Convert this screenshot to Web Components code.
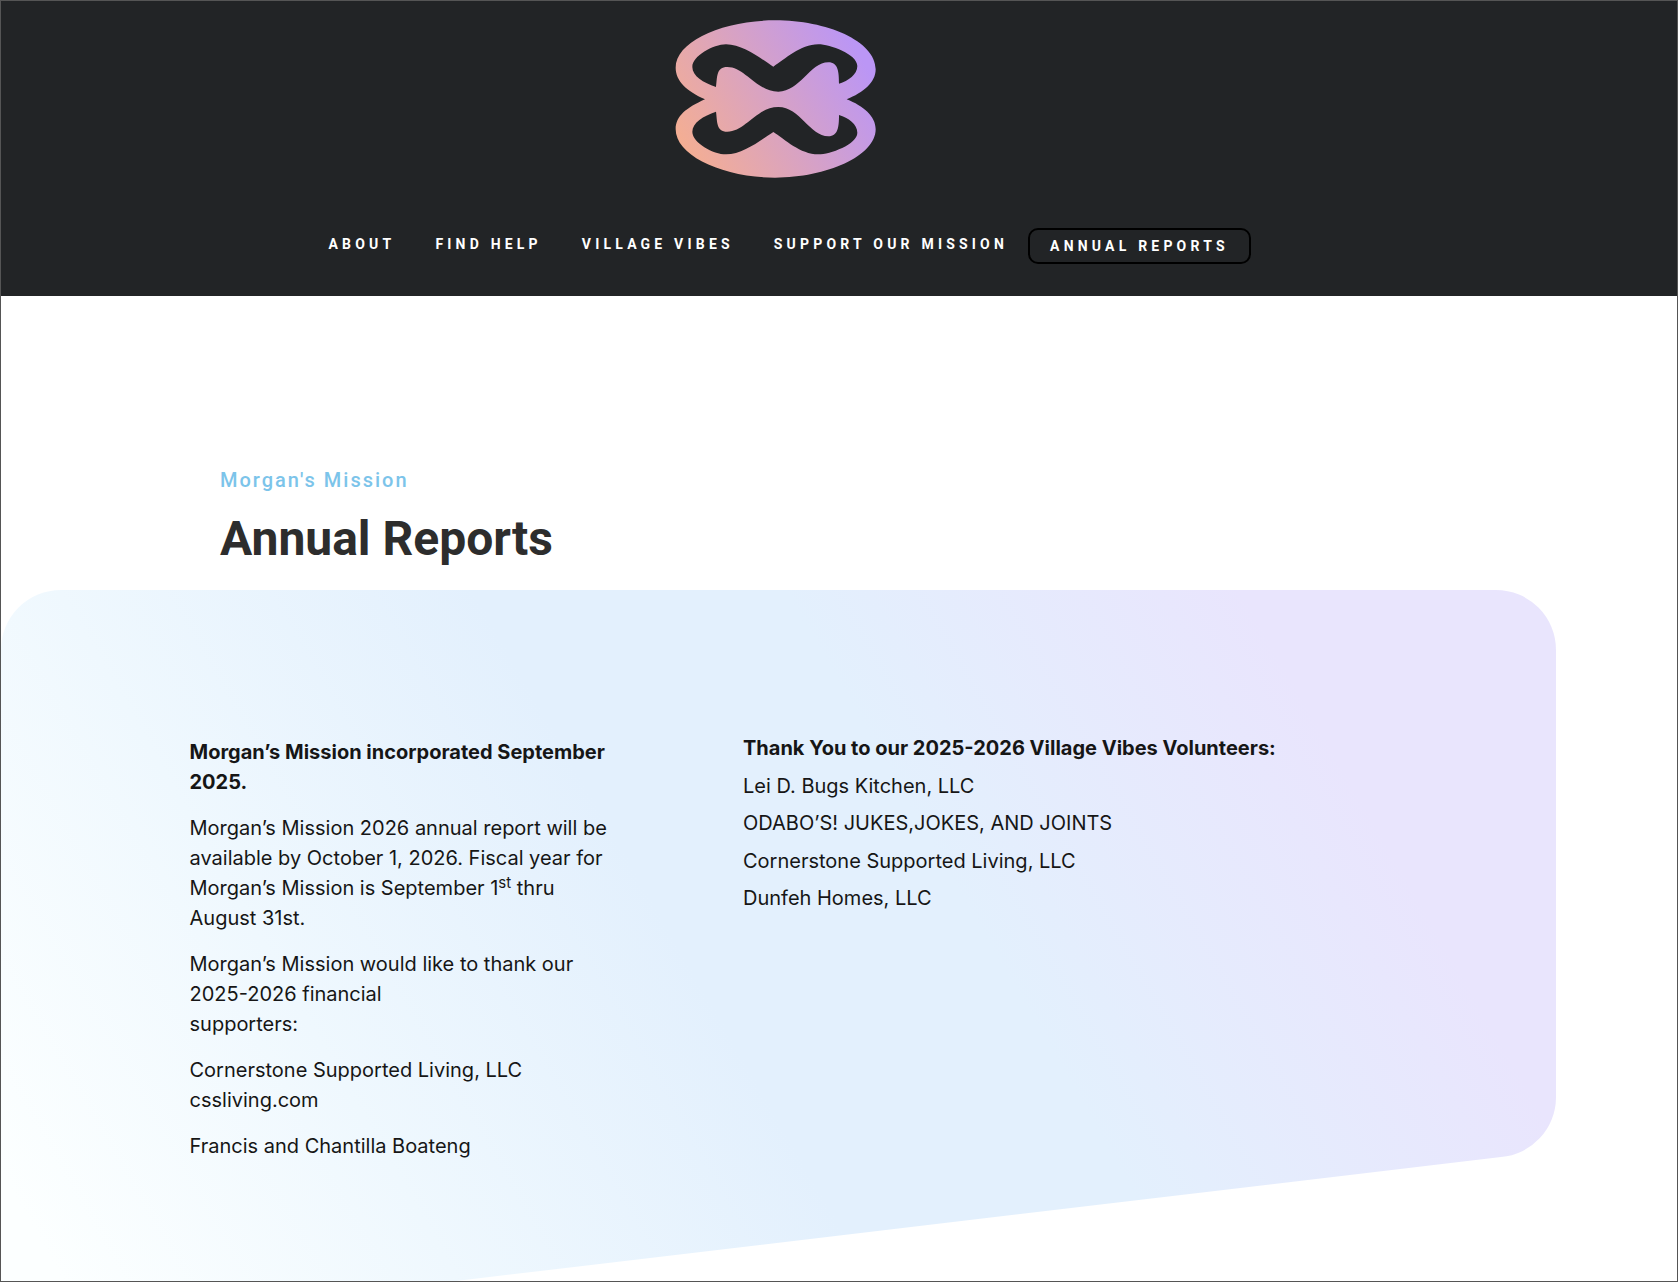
<!DOCTYPE html>
<html lang="en">
<head>
<meta charset="utf-8">
<title>Annual Reports</title>
<style>
    html, body { margin: 0; padding: 0; background: #fff; }
</style>
</head>
<body>
<site-page>
    <site-header></site-header>
    <page-title label="Morgan's Mission" heading="Annual Reports"></page-title>
    <report-panel>
        <div slot="left">
            <p><b>Morgan’s Mission incorporated September 2025.</b></p>
            <p>Morgan’s Mission 2026 annual report will be available by October 1, 2026. Fiscal year for Morgan’s Mission is September 1<sup>st</sup> thru August 31st.</p>
            <p>Morgan’s Mission would like to thank our 2025-2026 financial<br>supporters:</p>
            <p>Cornerstone Supported Living, LLC<br>cssliving.com</p>
            <p>Francis and Chantilla Boateng</p>
        </div>
        <div slot="right">
            <p><b>Thank You to our 2025-2026 Village Vibes Volunteers:</b></p>
            <p>Lei D. Bugs Kitchen, LLC</p>
            <p>ODABO’S! JUKES,JOKES, AND JOINTS</p>
            <p>Cornerstone Supported Living, LLC</p>
            <p>Dunfeh Homes, LLC</p>
        </div>
    </report-panel>
</site-page>

<script>
class SitePage extends HTMLElement {
    constructor() {
        super();
        this.attachShadow({ mode: 'open' });
        this.shadowRoot.innerHTML = `
            <style>
                :host {
                    display: block;
                    box-sizing: border-box;
                    height: 1282px;
                    overflow: hidden;
                    border: 1px solid #555;
                    background: #fff;
                }
            </style>
            <slot></slot>
        `;
    }
}

class SiteLogo extends HTMLElement {
    constructor() {
        super();
        this.attachShadow({ mode: 'open' });
        this.shadowRoot.innerHTML = `
            <style>
                :host { display: block; width: 280px; height: 200px; }
                svg { display: block; }
            </style>
            <svg width="280" height="200" viewBox="0 0 840 600">
                <defs>
                    <linearGradient id="g" gradientUnits="userSpaceOnUse" x1="170" y1="510" x2="690" y2="215">
                        <stop offset="0" stop-color="#f4ae93"/>
                        <stop offset="1" stop-color="#bb96f5"/>
                    </linearGradient>
                </defs>
                <path fill="url(#g)" d="M195 295C140 270 107 240 107 200C107 120 250 58 405 58C560 58 707 120 707 205C707 245 670 275 620 295C670 315 707 345 707 385C707 465 560 530 405 530C250 530 107 465 107 385C107 345 140 320 195 295Z"/>
                <path fill="#222426" d="M228 258C190 245 157 225 157 198C157 165 220 130 258 130C310 130 365 175 400 197C435 175 480 130 535 130C570 130 652 160 652 195C652 220 625 240 597 248C597 215 595 184 565 184C510 184 480 272 415 272C350 272 315 198 262 198C228 198 232 230 228 258Z"/>
                <path fill="#222426" transform="matrix(1 0 0 -1 0 590)" d="M228 258C190 245 157 225 157 198C157 165 220 130 258 130C310 130 365 175 400 197C435 175 480 130 535 130C570 130 652 160 652 195C652 220 625 240 597 248C597 215 595 184 565 184C510 184 480 272 415 272C350 272 315 198 262 198C228 198 232 230 228 258Z"/>
            </svg>
        `;
    }
}

class NavLink extends HTMLElement {
    constructor() {
        super();
        this.attachShadow({ mode: 'open' });
        this.shadowRoot.innerHTML = `
            <style>
                :host {
                    display: block;
                    padding: 0 20px 4px;
                    font: 700 14px/20px Roboto, sans-serif;
                    letter-spacing: 4.2px;
                    color: #fff;
                    white-space: nowrap;
                }
                :host([current]) {
                    padding: 6px 20px;
                    border: 2px solid #000;
                    border-radius: 10px;
                }
            </style>
            <slot></slot>
        `;
    }
}

class SiteHeader extends HTMLElement {
    constructor() {
        super();
        this.attachShadow({ mode: 'open' });
        this.shadowRoot.innerHTML = `
            <style>
                :host {
                    display: block;
                    height: 295px;
                    background: #222426;
                }
                .logo { display: flex; padding-left: 639px; height: 227px; }
                nav { display: flex; align-items: center; padding-left: 307.5px; }
            </style>
            <div class="logo"><site-logo></site-logo></div>
            <nav>
                <nav-link>ABOUT</nav-link>
                <nav-link>FIND HELP</nav-link>
                <nav-link>VILLAGE VIBES</nav-link>
                <nav-link>SUPPORT OUR MISSION</nav-link>
                <nav-link current>ANNUAL REPORTS</nav-link>
            </nav>
        `;
    }
}

class PageTitle extends HTMLElement {
    constructor() {
        super();
        this.attachShadow({ mode: 'open' });
        this.shadowRoot.innerHTML = `
            <style>
                :host { display: block; height: 294px; box-sizing: border-box; padding: 172px 0 0 219px; }
                .label {
                    font: 500 20px/24px Roboto, sans-serif;
                    letter-spacing: 2px;
                    color: #7cc4ea;
                }
                h1 {
                    margin: 19px 0 0;
                    font: 700 48px/56px Roboto, sans-serif;
                    color: #2d2d2d;
                }
            </style>
            <div class="label"></div>
            <h1></h1>
        `;
    }

    connectedCallback() {
        this.shadowRoot.querySelector('.label').textContent = this.getAttribute('label');
        this.shadowRoot.querySelector('h1').textContent = this.getAttribute('heading');
    }
}

class ReportPanel extends HTMLElement {
    constructor() {
        super();
        this.attachShadow({ mode: 'open' });
        this.shadowRoot.innerHTML = `
            <style>
                :host {
                    display: block;
                    position: relative;
                    height: 692px;
                    font: 400 20px/30px Inter, sans-serif;
                    color: #161616;
                }
                .bg {
                    position: absolute;
                    inset: 0;
                    background: linear-gradient(60deg, #fcffff 3%, #eff8fe 22%, #e3f0fd 42%, #e3f0fd 57%, #e9e5fd 79%);
                    clip-path: path("M0 60A60 60 0 0 1 60 0H1495A60 60 0 0 1 1555 60V508A60 60 0 0 1 1500 567L0 745Z");
                }
                .cols {
                    position: relative;
                    display: grid;
                    grid-template-columns: 553.5px 1fr;
                    padding: 143px 0 0 188.5px;
                }
                .left { width: 430px; padding-top: 4px; }
                ::slotted(div) { display: block; }
            </style>
            <div class="bg"></div>
            <div class="cols">
                <div class="left"><slot name="left"></slot></div>
                <div><slot name="right"></slot></div>
            </div>
        `;
    }
}

customElements.define('site-page', SitePage);
customElements.define('site-logo', SiteLogo);
customElements.define('nav-link', NavLink);
customElements.define('site-header', SiteHeader);
customElements.define('page-title', PageTitle);
customElements.define('report-panel', ReportPanel);
</script>
<style>
    report-panel p { margin: 0 0 16px; }
    report-panel [slot="right"] p { margin: 0 0 7.5px; }
    report-panel b { font-weight: 700; }
    report-panel sup { font-size: 15px; line-height: 0; vertical-align: 7px; }
</style>
</body>
</html>
